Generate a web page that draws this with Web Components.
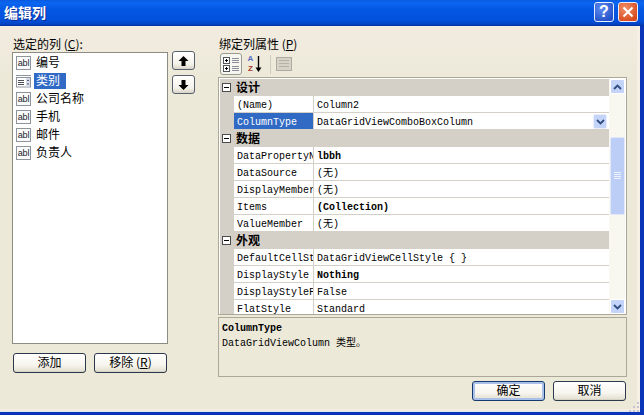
<!DOCTYPE html>
<html lang="zh">
<head>
<meta charset="utf-8">
<title>编辑列</title>
<style>
  html, body { margin: 0; padding: 0; background: #ece9d8; }
  body { font: 12px "Liberation Mono", "Noto Sans CJK SC", monospace; color: #000; }
</style>
</head>
<body>

<xp-window caption="编辑列">
  <div slot="left">
    <xp-label>选定的列 (<u>C</u>):</xp-label>
    <column-list>
      <column-item>编号</column-item>
      <column-item kind="combo" selected>类别</column-item>
      <column-item>公司名称</column-item>
      <column-item>手机</column-item>
      <column-item>邮件</column-item>
      <column-item>负责人</column-item>
    </column-list>
    <button-row>
      <xp-button>添加</xp-button>
      <xp-button>移除 (<u>R</u>)</xp-button>
    </button-row>
  </div>

  <div slot="arrows">
    <arrow-button dir="up"></arrow-button>
    <arrow-button dir="down"></arrow-button>
  </div>

  <div slot="right">
    <xp-label>绑定列属性 (<u>P</u>)</xp-label>
    <grid-toolbar></grid-toolbar>
    <prop-grid>
      <prop-cat>设计</prop-cat>
      <prop-row name="(Name)">Column2</prop-row>
      <prop-row name="ColumnType" selected>DataGridViewComboBoxColumn</prop-row>
      <prop-cat>数据</prop-cat>
      <prop-row name="DataPropertyN" bold>lbbh</prop-row>
      <prop-row name="DataSource">(无)</prop-row>
      <prop-row name="DisplayMember">(无)</prop-row>
      <prop-row name="Items" bold>(Collection)</prop-row>
      <prop-row name="ValueMember">(无)</prop-row>
      <prop-cat>外观</prop-cat>
      <prop-row name="DefaultCellSt">DataGridViewCellStyle { }</prop-row>
      <prop-row name="DisplayStyle" bold>Nothing</prop-row>
      <prop-row name="DisplayStyleF">False</prop-row>
      <prop-row name="FlatStyle" last>Standard</prop-row>
    </prop-grid>
    <help-box heading="ColumnType">DataGridViewColumn 类型。</help-box>
    <button-row align="end">
      <xp-button default>确定</xp-button>
      <xp-button>取消</xp-button>
    </button-row>
  </div>
</xp-window>

<script>
const CJK = '"Noto Sans CJK SC", sans-serif';
const MONO = '"Liberation Mono", "Noto Sans CJK SC", monospace';

class XpWindow extends HTMLElement {
  constructor() {
    super();
    this.attachShadow({ mode: 'open' });
    this.shadowRoot.innerHTML = `
      <style>
        :host { display: flex; flex-direction: column; width: 644px; height: 415px; overflow: hidden; box-sizing: border-box;
                background: #0a35b8; position: relative; }
        .title { display: flex; align-items: center; height: 26px; flex: none; box-sizing: border-box; padding: 0 6px 2px 4px;
                 background: linear-gradient(#0a5ae0 0, #0a66f0 3px, #0458e4 9px, #0350dc 20px, #0344c4 24px, #03309c 26px); }
        .caption { flex: 1; font: bold 14px/18px ${CJK}; color: #fff; text-shadow: 1px 1px 0 #0a2a90; }
        .ctl { width: 20px; height: 20px; box-sizing: border-box; border: 1px solid #e8eefc; border-radius: 3px; margin-left: 4px;
               display: flex; align-items: center; justify-content: center; }
        .help { background: radial-gradient(circle at 35% 30%, #5f8cf0, #2350c8 80%); color: #fff; font: bold 16px/18px "Liberation Sans", sans-serif; }
        .close { background: radial-gradient(circle at 35% 30%, #f0906a, #d8491c 80%); }
        .frame { flex: 1; display: flex; margin: 0 4px 3px 0; padding: 12px 13px 11px 12px; min-height: 0; gap: 4px;
                 background: linear-gradient(#f2ece0, #ece9d8 60px);
                 box-shadow: inset -3px 0 0 #f5efe6, inset 0 -1px 0 #dce8f6, inset 0 -3px 0 #f5ebe0; }
        ::slotted([slot=left]) { width: 156px; flex: none; display: flex; flex-direction: column; padding-bottom: 28px; }
        ::slotted([slot=arrows]) { width: 23px; flex: none; display: flex; flex-direction: column; gap: 5px; padding-top: 13px; }
        ::slotted([slot=right]) { flex: 1; min-width: 0; margin-left: 19px; display: flex; flex-direction: column; }
        .grip { position: absolute; right: 4px; bottom: 3px; }
      </style>
      <div class="title">
        <span class="caption"></span>
        <div class="ctl help">?</div>
        <div class="ctl close">
          <svg width="12" height="12" viewBox="0 0 12 12"><path d="M1.500 1.500 10.500 10.500M10.500 1.500 1.500 10.500" stroke="#fff" stroke-width="2" fill="none"/></svg>
        </div>
      </div>
      <div class="frame">
        <slot name="left"></slot>
        <slot name="arrows"></slot>
        <slot name="right"></slot>
      </div>
      <svg class="grip" width="11" height="11" viewBox="0 0 11 11"><path d="M8 1h2v2H8ZM4 5h2v2H4ZM8 5h2v2H8ZM0 9h2v2H0ZM4 9h2v2H4ZM8 9h2v2H8Z" fill="#c8c4d8"/></svg>`;
  }
  connectedCallback() {
    this.shadowRoot.querySelector('.caption').textContent = this.getAttribute('caption');
  }
}

class XpLabel extends HTMLElement {
  constructor() {
    super();
    this.attachShadow({ mode: 'open' });
    this.shadowRoot.innerHTML = `
      <style>
        :host { display: block; height: 14px; padding-left: 1px; font: 12px/12px ${CJK}; white-space: nowrap; }
      </style>
      <slot></slot>`;
  }
}

class ColumnList extends HTMLElement {
  constructor() {
    super();
    this.attachShadow({ mode: 'open' });
    this.shadowRoot.innerHTML = `
      <style>
        :host { display: flex; flex-direction: column; flex: 1; min-height: 0; box-sizing: border-box; background: #fff;
                border: 1px solid #8c8c84; padding: 1px 0 0 3px; }
      </style>
      <slot></slot>`;
  }
}

class ColumnItem extends HTMLElement {
  constructor() {
    super();
    this.attachShadow({ mode: 'open' });
    this.shadowRoot.innerHTML = `
      <style>
        :host { display: flex; align-items: center; gap: 4px; height: 18px; }
        .ico { width: 15px; height: 14px; flex: none; }
        .abl { box-sizing: border-box; border: 1px solid #8d949c; background: #fbfbfb; color: #20242c;
               font: 9px/12px "Liberation Sans", sans-serif; text-align: center; letter-spacing: -.2px; }
        .txt { font: 12px/16px ${CJK}; padding: 0 2px; margin: -2px 0 0 -1px; }
        :host([selected]) .txt { background: #316ac5; color: #fff; margin-top: 0; padding: 0 6px 2px 2px; line-height: 14px; }
      </style>
      <span class="slot-ico"></span>
      <span class="txt"><slot></slot></span>`;
  }
  connectedCallback() {
    const holder = this.shadowRoot.querySelector('.slot-ico');
    holder.style.display = 'contents';
    if (this.getAttribute('kind') === 'combo') {
      holder.innerHTML = `<svg class="ico" viewBox="0 0 15 14">
        <path d="M0 1.500H15" stroke="#8d949c"/><rect x="0.500" y="3.500" width="14" height="9.500" fill="#fff" stroke="#8d949c"/>
        <path d="M2 6.500h6M2 8.500h6M2 10.500h6" stroke="#4a4f58"/>
        <rect x="10" y="4" width="4" height="8.500" fill="#d8dcec"/>
        <path d="M11 7 12 5.500 13 7ZM11 9.500 12 11 13 9.500Z" fill="#20242c"/></svg>`;
    } else {
      holder.innerHTML = '<div class="ico abl">abl</div>';
    }
  }
}

class ButtonRow extends HTMLElement {
  constructor() {
    super();
    this.attachShadow({ mode: 'open' });
    this.shadowRoot.innerHTML = `
      <style>
        :host { display: flex; gap: 8px; margin-top: 9px; padding-left: 1px; }
        :host([align=end]) { justify-content: flex-end; margin-top: 4px; padding-right: 1px; }
      </style>
      <slot></slot>`;
  }
}

class XpButton extends HTMLElement {
  constructor() {
    super();
    this.attachShadow({ mode: 'open' });
    this.shadowRoot.innerHTML = `
      <style>
        :host { display: flex; align-items: center; justify-content: center; box-sizing: border-box; width: 73px; height: 20px;
                padding-bottom: 2px; border: 1px solid #2a3a4c; border-radius: 3px; font: 12px/16px ${CJK};
                background: linear-gradient(#fff, #f7f5ee 60%, #e6e2d4 92%, #cfcbbc); }
        :host([default]) { border-color: #16396e; box-shadow: inset 0 0 0 2px #a8c0ea; }
      </style>
      <slot></slot>`;
  }
}

class ArrowButton extends HTMLElement {
  constructor() {
    super();
    this.attachShadow({ mode: 'open' });
    this.shadowRoot.innerHTML = `
      <style>
        :host { display: flex; align-items: center; justify-content: center; box-sizing: border-box; width: 23px; height: 19px;
                border: 1px solid #55606c; border-radius: 3px; background: linear-gradient(#fff, #f4f2ea 70%, #d8d4c6); }
        :host([dir=down]) svg { transform: scaleY(-1); }
      </style>
      <svg width="11" height="10" viewBox="0 0 11 10"><path d="M5.500 0 10.500 5H7.500V10H3.500V5H.5Z" fill="#000"/></svg>`;
  }
}

class GridToolbar extends HTMLElement {
  constructor() {
    super();
    this.attachShadow({ mode: 'open' });
    this.shadowRoot.innerHTML = `
      <style>
        :host { display: flex; align-items: center; height: 24px; margin: 1px 0 1px; padding-left: 2px; gap: 1px; }
        .b { width: 22px; height: 22px; box-sizing: border-box; display: flex; align-items: center; justify-content: center; position: relative; }
        .on { border: 1px solid #9a9c94; border-radius: 3px; background: #f6f5ef; }
        .sep { width: 1px; height: 19px; background: #cfccbe; margin: 0 1px 0 4px; }
        .az { font: bold 8px/10px "Liberation Sans", sans-serif; display: flex; flex-direction: column; align-items: center; margin-right: 7px; }
        .a { color: #5a6fc0; }
        .z { color: #a03a2a; }
        .arrow { position: absolute; right: 3px; top: 2px; }
      </style>
      <div class="b on">
        <svg width="18" height="18" viewBox="0 0 18 18">
          <rect x="1.500" y="2.500" width="6" height="6" fill="#fff" stroke="#50545c"/><path d="M3 5.500h3M4.500 4v3" stroke="#000"/>
          <rect x="1.500" y="10.500" width="6" height="6" fill="#fff" stroke="#50545c"/><path d="M3 13.500h3M4.500 12v3" stroke="#000"/>
          <path d="M10 3.500h7M10 5.500h7M10 7.500h7M10 11.500h7M10 13.500h7M10 15.500h7" stroke="#8a8e98"/>
        </svg>
      </div>
      <div class="b">
        <div class="az"><span class="a">A</span><span class="z">Z</span></div>
        <svg class="arrow" width="7" height="18" viewBox="0 0 7 18"><path d="M3.500 1V15" stroke="#000" stroke-width="1.400"/><path d="M.5 12.500H6.500L3.500 17Z" fill="#000"/></svg>
      </div>
      <div class="sep"></div>
      <div class="b">
        <svg width="16" height="16" viewBox="0 0 16 16"><rect x=".5" y="1.500" width="15" height="13" fill="#d6d3c6" stroke="#aeaba0"/>
          <path d="M3 4.500h10M3 7.500h10M3 10.500h10" stroke="#b4b1a6"/></svg>
      </div>`;
  }
}

class PropGrid extends HTMLElement {
  constructor() {
    super();
    this.attachShadow({ mode: 'open' });
    this.shadowRoot.innerHTML = `
      <style>
        :host { display: flex; height: 238px; flex: none; box-sizing: border-box; background: #fff; overflow: hidden;
                border: 1px solid #aca899; padding: 1px 1px 0 1px; margin-bottom: 2px; }
        .rows { flex: 1; min-width: 0; overflow: hidden; }
        .bar { width: 16px; flex: none; display: flex; flex-direction: column; background: #f8f7f0; box-sizing: border-box; padding: 0 0 0 1px; }
        .btn { height: 15px; flex: none; box-sizing: border-box; border: 1px solid #fff; border-radius: 2px; background: #c4d4f8;
               display: flex; align-items: center; justify-content: center; }
        .thumb { height: 78px; margin-top: 43px; box-sizing: border-box; border: 1px solid #e2e8fa; border-radius: 2px;
                 background: #bccdf6; display: flex; align-items: center; justify-content: center; }
        .sp { flex: 1; }
      </style>
      <div class="rows"><slot></slot></div>
      <div class="bar">
        <div class="btn"><svg width="9" height="6" viewBox="0 0 9 6"><path d="M1 5 4.500 1.500 8 5" fill="none" stroke="#2f4d82" stroke-width="1.800"/></svg></div>
        <div class="thumb"><svg width="7" height="8" viewBox="0 0 7 8"><path d="M0 .5h7M0 2.500h7M0 4.500h7M0 6.500h7" stroke="#eef2fc"/></svg></div>
        <div class="sp"></div>
        <div class="btn"><svg width="9" height="6" viewBox="0 0 9 6"><path d="M1 1 4.500 4.500 8 1" fill="none" stroke="#2f4d82" stroke-width="1.800"/></svg></div>
      </div>`;
  }
}

class PropCat extends HTMLElement {
  constructor() {
    super();
    this.attachShadow({ mode: 'open' });
    this.shadowRoot.innerHTML = `
      <style>
        :host { display: flex; align-items: center; height: 17px; box-sizing: border-box; padding-bottom: 2px; background: #d4d0c8; font: bold 12px/15px ${CJK}; }
        svg { margin: 2px 5px 0 2px; flex: none; }
      </style>
      <svg width="9" height="9" viewBox="0 0 9 9"><rect x=".5" y=".5" width="8" height="8" fill="#fff" stroke="#4c4c4c"/><path d="M2 4.500h5" stroke="#000"/></svg>
      <slot></slot>`;
  }
}

class PropRow extends HTMLElement {
  constructor() {
    super();
    this.attachShadow({ mode: 'open' });
    this.shadowRoot.innerHTML = `
      <style>
        :host { display: flex; height: 17px; position: relative; background: #fff; font: 10px/19px ${MONO}; }
        .gut { width: 14px; flex: none; background: #d4d0c8; }
        .wrap { display: flex; flex: 1; min-width: 0; border-bottom: 1px solid #d4d0c8; height: 17px; box-sizing: border-box; }
        .name, .val { box-sizing: border-box; height: 16px; overflow: hidden; white-space: nowrap; }
        .name { width: 80px; flex: none; padding-left: 3px; border-right: 1px solid #d4d0c8; }
        .val { flex: 1; min-width: 0; padding-left: 3px; }
        :host([bold]) .val { font-weight: bold; }
        :host([selected]) .name { background: #316ac5; color: #fff; }
        .drop { position: absolute; right: 2px; top: 1px; width: 14px; height: 15px; box-sizing: border-box; border: 1px solid #e8eefc; border-radius: 2px;
                background: #c4d4f8; display: flex; align-items: center; justify-content: center; }
      </style>
      <div class="gut"></div>
      <div class="wrap">
        <div class="name"></div>
        <div class="val"><slot></slot></div>
      </div>`;
  }
  connectedCallback() {
    this.shadowRoot.querySelector('.name').textContent = this.getAttribute('name');
    if (this.hasAttribute('selected')) {
      const d = document.createElement('div');
      d.className = 'drop';
      d.innerHTML = '<svg width="9" height="6" viewBox="0 0 9 6"><path d="M1 1 4.500 4.500 8 1" fill="none" stroke="#2f4d82" stroke-width="1.800"/></svg>';
      this.shadowRoot.appendChild(d);
    }
  }
}

class HelpBox extends HTMLElement {
  constructor() {
    super();
    this.attachShadow({ mode: 'open' });
    this.shadowRoot.innerHTML = `
      <style>
        :host { display: block; box-sizing: border-box; height: 60px; flex: none; background: #ece9d8; border: 1px solid #aca899;
                padding: 3px 3px; font: 10px/14px ${MONO}; }
        .h { font-weight: bold; height: 16px; line-height: 16px; }
      </style>
      <div class="h"></div>
      <div><slot></slot></div>`;
  }
  connectedCallback() {
    this.shadowRoot.querySelector('.h').textContent = this.getAttribute('heading');
  }
}

customElements.define('xp-window', XpWindow);
customElements.define('xp-label', XpLabel);
customElements.define('column-list', ColumnList);
customElements.define('column-item', ColumnItem);
customElements.define('button-row', ButtonRow);
customElements.define('xp-button', XpButton);
customElements.define('arrow-button', ArrowButton);
customElements.define('grid-toolbar', GridToolbar);
customElements.define('prop-grid', PropGrid);
customElements.define('prop-cat', PropCat);
customElements.define('prop-row', PropRow);
customElements.define('help-box', HelpBox);
</script>
</body>
</html>
